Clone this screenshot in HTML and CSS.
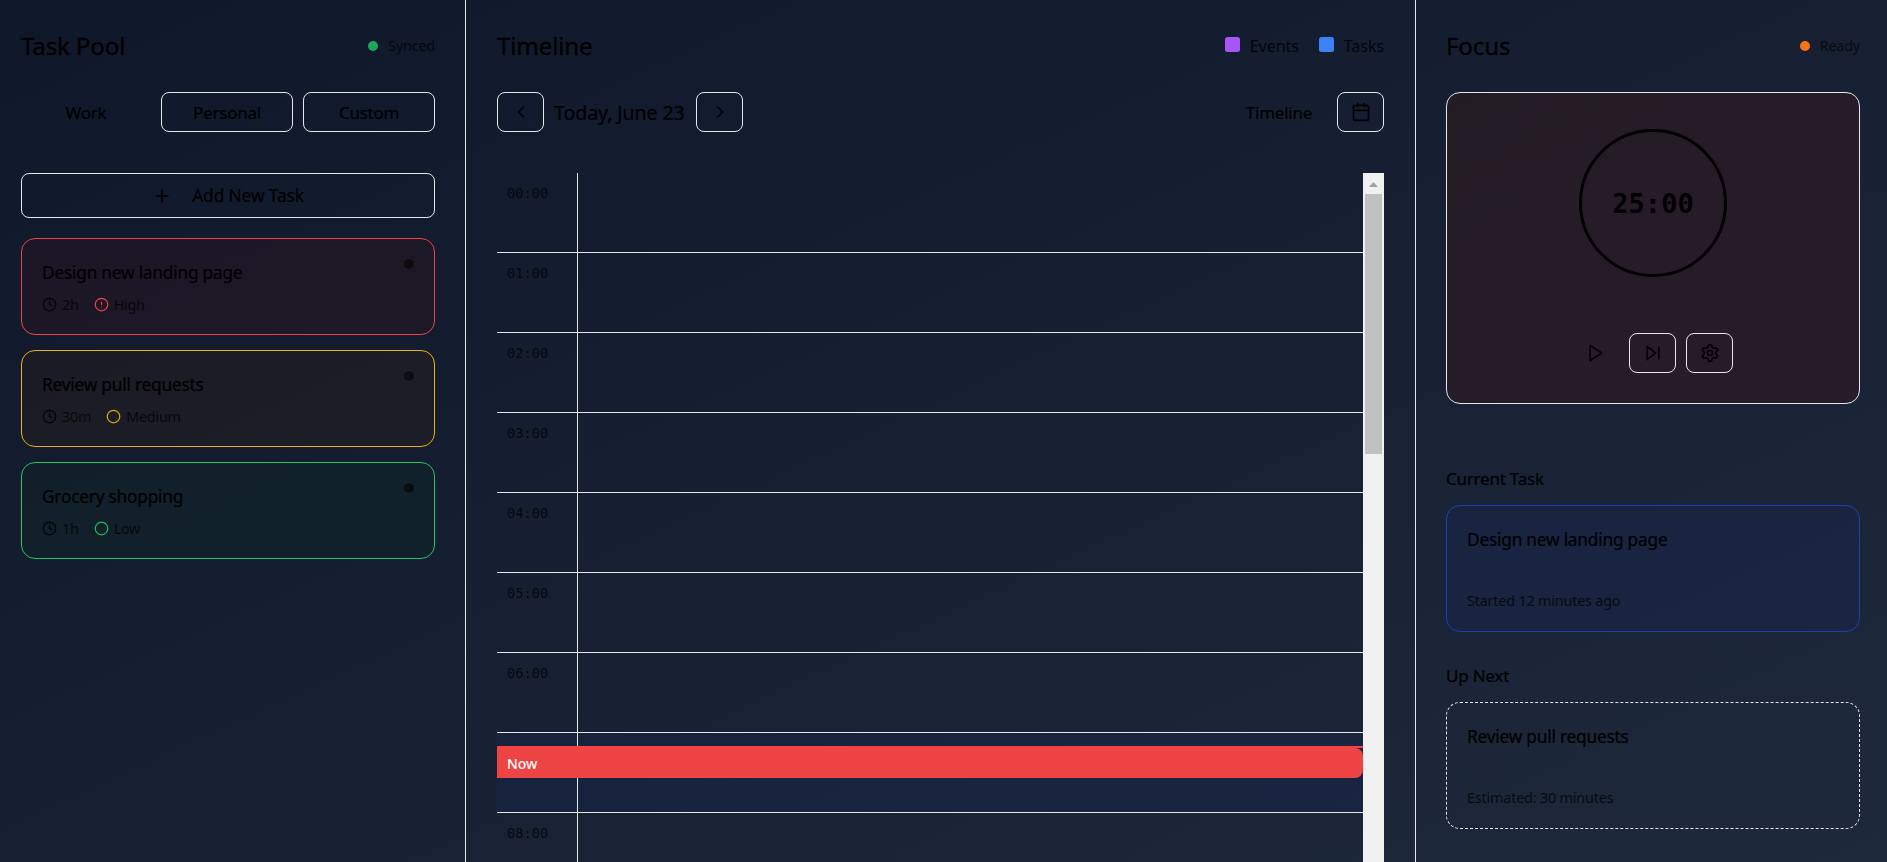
FILE: index.html
```html
<!DOCTYPE html>
<html lang="en">
<head>
<meta charset="utf-8">
<title>Task Pool</title>
<link rel="stylesheet" href="styles.css">
</head>
<body>
<svg class="defs" aria-hidden="true">
  <symbol id="clock" viewBox="0 0 24 24"><circle cx="12" cy="12" r="10"/><path d="M12 6v6l4 2"/></symbol>
  <symbol id="alert" viewBox="0 0 24 24"><circle cx="12" cy="12" r="10"/><path d="M12 8v4M12 16h.01"/></symbol>
  <symbol id="circle" viewBox="0 0 24 24"><circle cx="12" cy="12" r="10"/></symbol>
</svg>
<main class="app">
  <aside class="panel pool">
    <header class="head"><h2>Task Pool</h2><div class="status"><i class="dot green"></i>Synced</div></header>
    <div class="tabs">
      <button class="btn plain">Work</button><button class="btn">Personal</button><button class="btn">Custom</button>
    </div>
    <button class="btn add"><svg class="icon" viewBox="0 0 24 24"><path d="M5 12h14M12 5v14"/></svg>Add New Task</button>
    <div class="tasks">
      <article class="card high">
        <div class="row"><h3>Design new landing page</h3><i class="dot mark"></i></div>
        <div class="meta"><span><svg class="icon sm"><use href="#clock"/></svg>2h</span><span><svg class="icon sm tone"><use href="#alert"/></svg>High</span></div>
      </article>
      <article class="card medium">
        <div class="row"><h3>Review pull requests</h3><i class="dot mark"></i></div>
        <div class="meta"><span><svg class="icon sm"><use href="#clock"/></svg>30m</span><span><svg class="icon sm tone"><use href="#circle"/></svg>Medium</span></div>
      </article>
      <article class="card low">
        <div class="row"><h3>Grocery shopping</h3><i class="dot mark"></i></div>
        <div class="meta"><span><svg class="icon sm"><use href="#clock"/></svg>1h</span><span><svg class="icon sm tone"><use href="#circle"/></svg>Low</span></div>
      </article>
    </div>
  </aside>

  <section class="panel timeline">
    <header class="head"><h2>Timeline</h2>
      <div class="legend"><span><i class="sq purple"></i>Events</span><span><i class="sq blue"></i>Tasks</span></div>
    </header>
    <div class="toolbar">
      <button class="btn square"><svg class="icon" viewBox="0 0 24 24"><path d="m15 18-6-6 6-6"/></svg></button>
      <span class="date">Today, June 23</span>
      <button class="btn square"><svg class="icon" viewBox="0 0 24 24"><path d="m9 18 6-6-6-6"/></svg></button>
      <button class="btn plain view">Timeline</button>
      <button class="btn square"><svg class="icon" viewBox="0 0 24 24"><path d="M8 2v4M16 2v4M3 10h18"/><rect x="3" y="4" width="18" height="18" rx="2"/></svg></button>
    </div>
    <div class="schedule">
      <div class="hours">
        <div class="hour"><time>00:00</time></div>
        <div class="hour"><time>01:00</time></div>
        <div class="hour"><time>02:00</time></div>
        <div class="hour"><time>03:00</time></div>
        <div class="hour"><time>04:00</time></div>
        <div class="hour"><time>05:00</time></div>
        <div class="hour"><time>06:00</time></div>
        <div class="hour current"><time></time><div class="now"><span>Now</span></div></div>
        <div class="hour"><time>08:00</time></div>
      </div>
      <div class="scrollbar"><svg class="arrow" viewBox="0 0 21 21"><path d="M6 14h9l-4.500-5z"/></svg><div class="thumb"></div></div>
    </div>
  </section>

  <aside class="panel focus">
    <header class="head"><h2>Focus</h2><div class="status"><i class="dot orange"></i>Ready</div></header>
    <div class="timer">
      <div class="ring">25:00</div>
      <div class="controls">
        <button class="btn plain square"><svg class="icon" viewBox="0 0 24 24"><path d="m5 3 14 9-14 9z"/></svg></button>
        <button class="btn square"><svg class="icon" viewBox="0 0 24 24"><path d="m5 4 10 8-10 8zM19 5v14"/></svg></button>
        <button class="btn square"><svg class="icon" viewBox="0 0 24 24"><path d="M12.220 2h-.44a2 2 0 0 0-2 2v.18a2 2 0 0 1-1 1.730l-.43.25a2 2 0 0 1-2 0l-.15-.08a2 2 0 0 0-2.730.73l-.22.38a2 2 0 0 0 .73 2.730l.15.1a2 2 0 0 1 1 1.720v.51a2 2 0 0 1-1 1.740l-.15.09a2 2 0 0 0-.73 2.730l.22.38a2 2 0 0 0 2.730.73l.15-.08a2 2 0 0 1 2 0l.43.25a2 2 0 0 1 1 1.730V20a2 2 0 0 0 2 2h.44a2 2 0 0 0 2-2v-.18a2 2 0 0 1 1-1.730l.43-.25a2 2 0 0 1 2 0l.15.08a2 2 0 0 0 2.730-.73l.22-.39a2 2 0 0 0-.73-2.730l-.15-.08a2 2 0 0 1-1-1.740v-.5a2 2 0 0 1 1-1.740l.15-.09a2 2 0 0 0 .73-2.730l-.22-.38a2 2 0 0 0-2.730-.73l-.15.08a2 2 0 0 1-2 0l-.43-.25a2 2 0 0 1-1-1.730V4a2 2 0 0 0-2-2z"/><circle cx="12" cy="12" r="3"/></svg></button>
      </div>
    </div>
    <div class="queue">
      <h3>Current Task</h3>
      <article class="card active"><h3>Design new landing page</h3><p>Started 12 minutes ago</p></article>
      <h3>Up Next</h3>
      <article class="card next"><h3>Review pull requests</h3><p>Estimated: 30 minutes</p></article>
    </div>
  </aside>
</main>
</body>
</html>
```
FILE: styles.css
```css
* { box-sizing: border-box; margin: 0; padding: 0; }
body {
  height: 862px;
  overflow: hidden;
  color: #000;
  font-family: "Noto Sans", "Open Sans", sans-serif;
  background: linear-gradient(to bottom right, #0f172a, #1e293b);
}
.defs { display: none; }
.app { display: grid; grid-template-columns: 466px 950px 471px; height: 862px; }
.panel { padding: 30px 31px 0 30px; height: 862px; overflow: hidden; }
.pool { padding: 30px 30px 0 21px; border-right: 1px solid #e5e7eb; }
.timeline { padding-left: 31px; border-right: 1px solid #e5e7eb; display: flex; flex-direction: column; }
.focus { padding-right: 27px; }

.head { display: flex; align-items: center; justify-content: space-between; height: 31px; margin-bottom: 31px; flex: none; }
h2 { font-size: 24.2px; font-weight: 400; line-height: 31px; letter-spacing: -.2px; -webkit-text-stroke: .3px #000; }
h3 { font-size: 17.3px; font-weight: 400; line-height: 27px; letter-spacing: -.22px; -webkit-text-stroke: .2px #000; }
.status { display: flex; align-items: center; gap: 10px; font-size: 14.4px; letter-spacing: -.2px; line-height: 20px; color: rgba(0, 0, 0, .7); }
.dot { width: 10px; height: 10px; border-radius: 50%; flex: none; }
.green { background: #21a557; }
.orange { background: #f97316; }
.mark { background: rgba(0, 0, 0, .55); }

.btn {
  display: flex; align-items: center; justify-content: center;
  height: 40px; padding-top: 1px;
  border: 1px solid #e5e7eb; border-radius: 8px;
  background: transparent; color: #000;
  font: 400 17px "Noto Sans", "Open Sans", sans-serif;
  letter-spacing: -.25px;
  -webkit-text-stroke: .2px #000;
}
.plain { border-color: transparent; }
.square { width: 47px; padding-top: 0; flex: none; }
.icon { width: 20px; height: 20px; fill: none; stroke: currentColor; stroke-width: 2; stroke-linecap: round; stroke-linejoin: round; flex: none; }
.sm { width: 15px; height: 15px; color: rgba(0, 0, 0, .9); }

.tabs { display: grid; grid-template-columns: 130px 132px 132px; gap: 10px; margin-bottom: 41px; }
.add { width: 100%; height: 45px; gap: 20px; padding: 0; font-size: 17.3px; letter-spacing: -.1px; margin-bottom: 20px; }
.tasks { display: grid; gap: 15px; }
.card { border: 1px solid #e5e7eb; border-radius: 14px; padding: 20px; }
.row { display: flex; justify-content: space-between; align-items: flex-start; margin-bottom: 8px; }
.meta { display: flex; gap: 15px; height: 20px; font-size: 14.4px; letter-spacing: -.25px; line-height: 21px; color: rgba(0, 0, 0, .75); }
.meta span { display: flex; align-items: center; gap: 5px; }
.high { border-color: #ef4444; background: rgba(69, 10, 10, .2); }
.medium { border-color: #eab308; background: rgba(66, 32, 6, .2); }
.low { border-color: #22c55e; background: rgba(5, 46, 22, .2); }
.high .tone { color: #e54345; }
.medium .tone { color: #dca90d; }
.low .tone { color: #23ba5b; }

.legend { display: flex; gap: 20px; font-size: 16.2px; letter-spacing: -.15px; line-height: 20px; color: rgba(0, 0, 0, .85); }
.legend span { display: flex; align-items: center; gap: 10px; }
.sq { width: 15px; height: 15px; margin-bottom: 2px; border-radius: 2.500px; }
.purple { background: #a855f7; }
.blue { background: #3b82f6; }
.toolbar { display: flex; align-items: center; gap: 10px; height: 40px; margin-bottom: 41px; flex: none; }
.date { width: 132px; font-size: 19.6px; letter-spacing: -.1px; line-height: 27px; padding-top: 1px; white-space: nowrap; -webkit-text-stroke: .2px #000; }
.view { margin-left: auto; padding: 1px 14px 0; }

.schedule { flex: 1; min-height: 0; display: flex; overflow: hidden; }
.hours { flex: 1; }
.hour { position: relative; height: 80px; border-bottom: 1px solid #e5e7eb; }
.hour time {
  display: block; width: 81px; height: 79px; padding: 10px 0 0 10px;
  border-right: 1px solid #e5e7eb;
  font: 13.7px/20px "DejaVu Sans Mono", monospace; color: rgba(0, 0, 0, .75);
}
.current { background: rgba(23, 37, 84, .3); }
.now { position: absolute; left: 0; right: 0; top: 13px; height: 32px; border-top: 2px solid #ef4444; }
.now span {
  display: block; height: 30px; padding-left: 10px; border-radius: 0 8px 8px 0;
  background: #ef4444; color: #fff; font-size: 14px; font-weight: 500; letter-spacing: -.1px; line-height: 31px;
}
.hour:last-child { border-bottom: 0; }
.scrollbar { width: 21px; background: #f1f1f1; flex: none; }
.arrow { display: block; width: 21px; height: 21px; fill: #a3a3a3; }
.thumb { height: 260px; margin: 0 2px; background: #c1c1c1; }

.timer {
  height: 312px; padding-top: 36px; margin-bottom: 61px;
  display: flex; flex-direction: column; align-items: center; gap: 56px;
  border: 1px solid #e5e7eb; border-radius: 14px;
  background: linear-gradient(to bottom right, rgba(67, 20, 7, .3), rgba(69, 10, 10, .3));
}
.ring {
  width: 148px; height: 148px; border: 3px solid #000; border-radius: 50%;
  display: flex; align-items: center; justify-content: center;
  font: bold 27px "DejaVu Sans Mono", monospace;
}
.controls { display: flex; gap: 10px; }
.controls .plain { width: 46px; }
.queue { display: flex; flex-direction: column; }
.queue > h3 { margin-bottom: 13px; font-size: 17px; }
.queue .card { height: 127px; display: flex; flex-direction: column; justify-content: space-between; }
.queue p { font-size: 14.4px; letter-spacing: -.2px; line-height: 20px; color: rgba(0, 0, 0, .75); }
.active { border-color: #1e40af; background: rgba(23, 37, 84, .33); margin-bottom: 30px; }
.next { border-style: dashed; }
```
